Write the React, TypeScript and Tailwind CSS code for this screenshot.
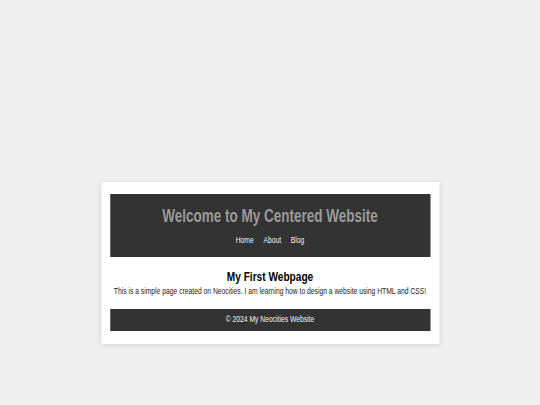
export default function App() {
  return (
    <div className="h-[405px] w-[540px] overflow-hidden bg-[#f0f0f0] font-['Liberation_Sans',Arial,sans-serif]">
      {/* page is shown squeezed horizontally, like the reference */}
      <div className="w-[720px] origin-top-left scale-x-75 pt-[182px]">
        <div className="mx-auto w-[451px] bg-white px-[12px] pt-[12px] pb-[13px] shadow-[0_1px_6px_rgba(0,0,0,0.12)]">
          <header className="bg-[#333333] pt-[11px] pb-[11px] text-center">
            <h1 className="text-[18px] leading-[22px] font-bold text-[#9a9a9a]">
              Welcome to My Centered Website
            </h1>
            <nav className="mt-[7px] flex justify-center gap-[13px] text-[9px] leading-[12px] text-[#f2f2f2]">
              <a>Home</a>
              <a>About</a>
              <a>Blog</a>
            </nav>
          </header>
          <main className="pt-[11px] pb-[12px] text-center text-black">
            <h2 className="text-[13.5px] leading-[17px] font-bold">My First Webpage</h2>
            <p className="text-[9px] leading-[12px] text-[#222]">
              This is a simple page created on Neocities. I am learning how to design a website using HTML and CSS!
            </p>
          </main>
          <footer className="flex h-[22px] items-center justify-center bg-[#333333] text-[9px] text-[#f2f2f2]">
            © 2024 My Neocities Website
          </footer>
        </div>
      </div>
    </div>
  );
}
